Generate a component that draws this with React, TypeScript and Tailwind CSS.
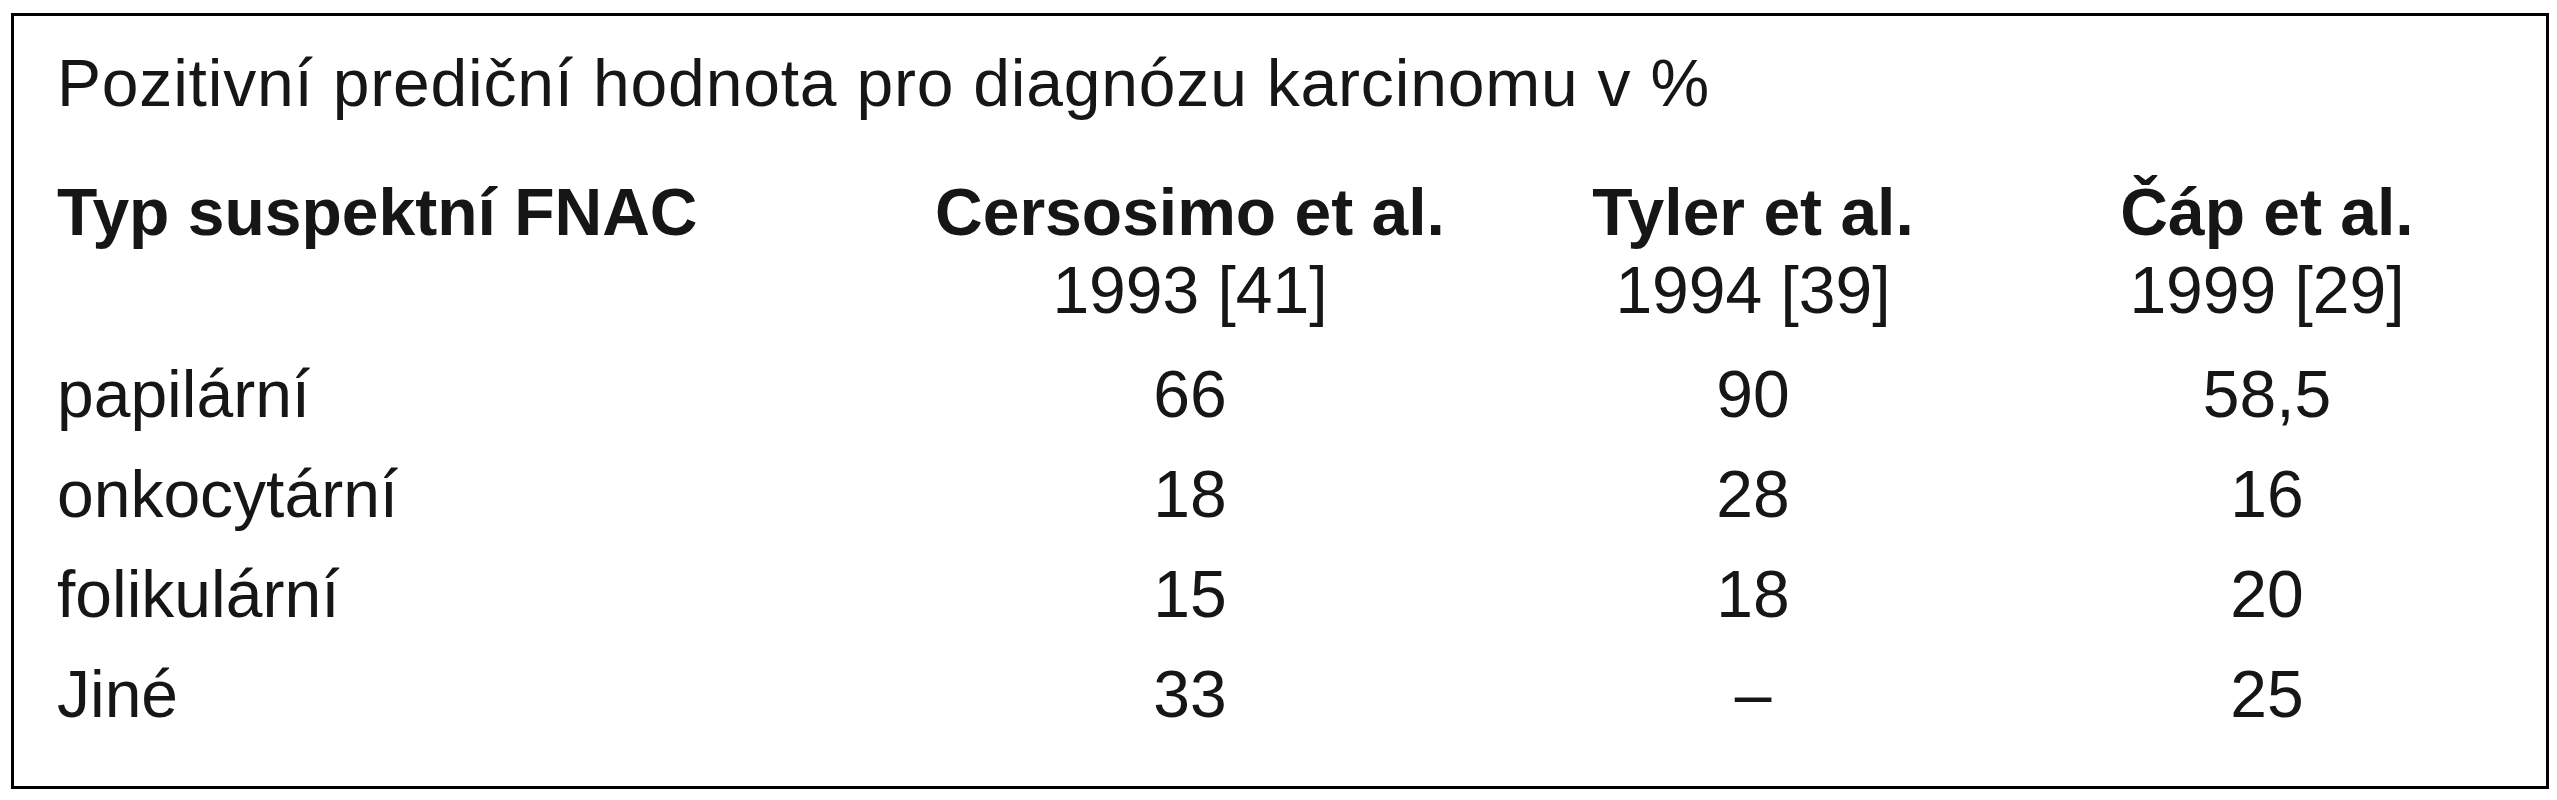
const rows = [
  { type: "papilární", a: "66", b: "90", c: "58,5" },
  { type: "onkocytární", a: "18", b: "28", c: "16" },
  { type: "folikulární", a: "15", b: "18", c: "20" },
  { type: "Jiné", a: "33", b: "–", c: "25" },
];

const studies = [
  { name: "Cersosimo et al.", ref: "1993 [41]" },
  { name: "Tyler et al.", ref: "1994 [39]" },
  { name: "Čáp et al.", ref: "1999 [29]" },
];

export default function App() {
  return (
    <div className="bg-white w-[2557px] h-[800px] pl-[11px] pt-[13px] font-['Liberation_Sans',Arial,sans-serif] text-[#161616]">
      <div className="w-[2538px] h-[776px] border-[3px] border-black pl-[43px] pt-[17px]">
        <p className="text-[66px] leading-[100px] h-[100px] tracking-[0.8px]">
          Pozitivní prediční hodnota pro diagnózu karcinomu v %
        </p>

        {/* header */}
        <div className="grid grid-cols-[843px_580px_546px_482px] mt-[40px]">
          <div className="text-[66px] leading-[78px] font-bold">Typ suspektní FNAC</div>
          {studies.map((s) => (
            <div key={s.ref} className="text-[66px] leading-[78px] text-center">
              <div className="font-bold">{s.name}</div>
              <div>{s.ref}</div>
            </div>
          ))}
        </div>

        {/* data rows */}
        <div className="grid grid-cols-[843px_580px_546px_482px] mt-[15px]">
          {rows.map((r) => (
            <div key={r.type} className="contents">
              <div className="text-[66px] leading-[100px]">{r.type}</div>
              <div className="text-[66px] leading-[100px] text-center">{r.a}</div>
              <div className="text-[66px] leading-[100px] text-center">{r.b}</div>
              <div className="text-[66px] leading-[100px] text-center">{r.c}</div>
            </div>
          ))}
        </div>
      </div>
    </div>
  );
}
